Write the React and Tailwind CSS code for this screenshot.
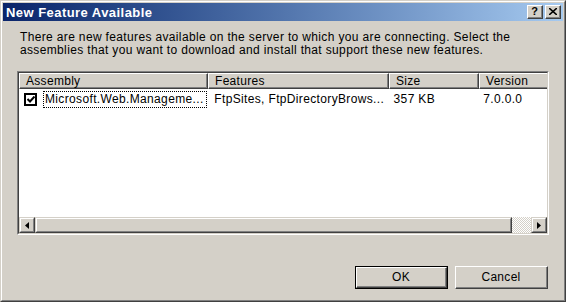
import React from "react";

const font = { fontFamily: '"Liberation Sans", Arial, sans-serif' };

function Raised({ className = "", children }) {
  return (
    <div className={`border-t border-l border-white border-b border-r border-b-[#404040] border-r-[#404040] ${className}`}>
      <div className="w-full h-full border-b border-r border-[#808080] flex items-center">{children}</div>
    </div>
  );
}

function TitleButton({ children }) {
  return (
    <div className="w-[16px] h-[14px] bg-[#d4d0c8] border-t border-l border-white border-b border-r border-b-[#404040] border-r-[#404040]">
      <div className="w-full h-full border-b border-r border-[#808080] flex items-center justify-center">{children}</div>
    </div>
  );
}

function HeaderCell({ w, children }) {
  return (
    <Raised className={`${w} h-[16px] shrink-0 bg-[#d4d0c8]`}>
      <span className="pl-[6px] text-[12px] leading-none text-black whitespace-nowrap tracking-[0.3px]">{children}</span>
    </Raised>
  );
}

function Arrow({ dir }) {
  return (
    <svg width="4" height="7" viewBox="0 0 4 7">
      {dir === "left" ? <path d="M4 0 L0 3.5 L4 7 Z" fill="#000" /> : <path d="M0 0 L4 3.5 L0 7 Z" fill="#000" />}
    </svg>
  );
}

function ScrollButton({ className = "", children }) {
  return (
    <div className={`h-[16px] bg-[#d4d0c8] border-t border-l border-[#d4d0c8] border-b border-r border-b-[#404040] border-r-[#404040] ${className}`}>
      <div className="w-full h-full border-t border-l border-white border-b border-r border-b-[#808080] border-r-[#808080] flex items-center justify-center">{children}</div>
    </div>
  );
}

function PushButton({ label, isDefault }) {
  return (
    <div className={`w-[93px] h-[23px] ${isDefault ? "border border-black" : ""}`}>
      <div className="w-full h-full bg-[#d4d0c8] border-t border-l border-white border-b border-r border-b-[#404040] border-r-[#404040]">
        <div className="w-full h-full border-b border-r border-[#808080] flex items-center justify-center text-[12px] text-black tracking-[0.3px]">{label}</div>
      </div>
    </div>
  );
}

export default function App() {
  return (
    <div style={font} className="w-[566px] h-[302px] bg-[#d4d0c8] border-t border-l border-[#d4d0c8] border-b border-r border-b-[#404040] border-r-[#404040] overflow-hidden">
      <div className="w-full h-full border-t border-l border-white border-b border-r border-b-[#808080] border-r-[#808080] p-[1px] flex flex-col">
        {/* title bar */}
        <div className="h-[18px] shrink-0 flex items-center justify-between pl-[3px] pr-[2px] bg-gradient-to-r from-[#0a246a] to-[#a6caf0]">
          <span className="text-white font-bold text-[13px] leading-none tracking-[0.45px]">New Feature Available</span>
          <div className="flex gap-[2px]">
            <TitleButton><span className="text-[11px] font-bold leading-none text-black">?</span></TitleButton>
            <TitleButton>
              <svg width="8" height="7" viewBox="0 0 8 7"><path d="M0 0 L8 7 M8 0 L0 7" stroke="#000" strokeWidth="1.6" /></svg>
            </TitleButton>
          </div>
        </div>

        {/* body */}
        <div className="flex-1 flex flex-col pl-[14px] pr-[14px] pt-[10px] pb-[10px]">
          <p className="pl-[3px] text-[12px] leading-[13px] text-black tracking-[0.35px]">
            There are new features available on the server to which you are connecting. Select the<br />
            assemblies that you want to download and install that support these new features.
          </p>

          {/* list view */}
          <div className="mt-[14px] w-[532px] h-[164px] border-t border-l border-[#808080] border-b border-r border-b-white border-r-white">
            <div className="w-full h-full bg-white border-t border-l border-[#404040] border-b border-r border-b-[#d4d0c8] border-r-[#d4d0c8] flex flex-col overflow-hidden">
              <div className="flex h-[16px] shrink-0">
                <HeaderCell w="w-[189px]">Assembly</HeaderCell>
                <HeaderCell w="w-[181px]">Features</HeaderCell>
                <HeaderCell w="w-[90px]">Size</HeaderCell>
                <HeaderCell w="w-[90px]">Version</HeaderCell>
              </div>
              <div className="flex items-center h-[18px] mt-[1px] text-[12px] text-black whitespace-nowrap tracking-[0.35px]">
                <div className="w-[189px] flex items-center pl-[5px]">
                  <div className="w-[13px] h-[13px] border-2 border-black bg-white flex items-center justify-center">
                    <svg width="8" height="7" viewBox="0 0 8 7"><path d="M0.5 3 L3 5.5 L7.5 0.5" stroke="#000" strokeWidth="2" fill="none" /></svg>
                  </div>
                  <div className="ml-[6px] h-[17px] flex-1 border border-dotted border-black flex items-center pl-[1px]">Microsoft.Web.Manageme...</div>
                </div>
                <div className="w-[181px] pl-[7px]">FtpSites, FtpDirectoryBrows...</div>
                <div className="w-[90px] pl-[6px]">357 KB</div>
                <div className="w-[70px] pl-[6px]">7.0.0.0</div>
              </div>
              <div className="flex-1" />
              {/* horizontal scrollbar */}
              <div className="flex h-[16px] shrink-0">
                <ScrollButton className="w-[16px]"><Arrow dir="left" /></ScrollButton>
                <ScrollButton className="w-[477px]" />
                <div className="w-[19px] h-[16px] bg-[repeating-conic-gradient(#d4d0c8_0_25%,#ffffff_0_50%)] bg-[length:2px_2px]" />
                <ScrollButton className="w-[16px]"><Arrow dir="right" /></ScrollButton>
              </div>
            </div>
          </div>

          <div className="flex-1" />
          <div className="flex justify-end gap-[7px] pr-[1px]">
            <PushButton label="OK" isDefault />
            <PushButton label="Cancel" />
          </div>
        </div>
      </div>
    </div>
  );
}
